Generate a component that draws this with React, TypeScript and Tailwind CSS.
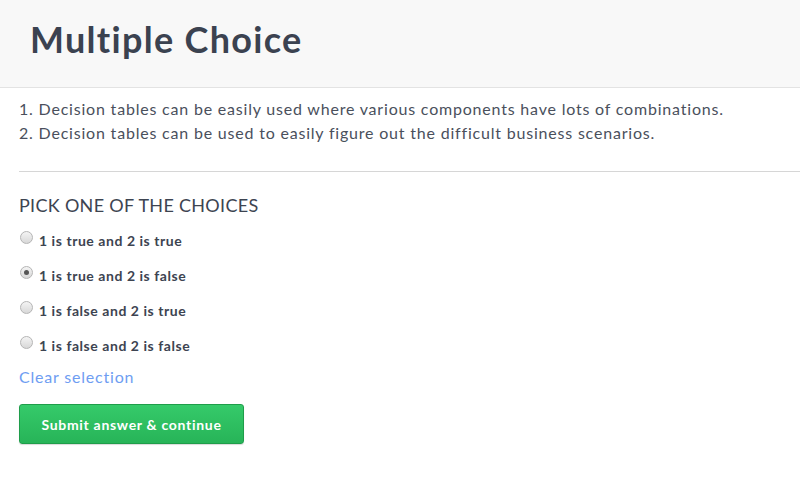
import React from "react";

const options = [
  "1 is true and 2 is true",
  "1 is true and 2 is false",
  "1 is false and 2 is true",
  "1 is false and 2 is false",
];

function Radio({ checked }: { checked: boolean }) {
  return (
    <span className="relative mt-[-6px] inline-flex h-[13px] w-[13px] shrink-0 items-center justify-center rounded-full border border-[#b5b5b5] bg-gradient-to-b from-[#f4f4f4] to-[#d8d8d8]">
      {checked && <span className="h-[5px] w-[5px] rounded-full bg-[#555]" />}
    </span>
  );
}

export default function App() {
  return (
    <div className="min-h-[503px] bg-white text-[#3d4451]" style={{ fontFamily: "Lato, 'Open Sans', sans-serif" }}>
      <div className="h-[88px] border-b border-[#e3e3e3] bg-[#f8f8f8] pl-[30px] pt-[17px]">
        <h1 className="text-[36px] font-bold leading-[44px] tracking-[1.3px] text-[#3b4250]">Multiple Choice</h1>
      </div>
      <div className="pl-[19px]">
        <div className="pt-[9px] text-[16px] leading-[24px] tracking-[0.8px] text-[#4a505c]">
          <p>1. Decision tables can be easily used where various components have lots of combinations.</p>
          <p>2. Decision tables can be used to easily figure out the difficult business scenarios.</p>
        </div>
        <div className="mt-[26px] h-px bg-[#d6d6d6]" />
        <div className="pt-[21px] text-[18px] leading-[24px] tracking-[0.3px] uppercase text-[#3d4451]">Pick one of the choices</div>
        <div className="mt-[6px] flex flex-col">
          {options.map((o, i) => (
            <label key={o} className="flex h-[35px] items-center gap-[6px] pl-[1px]">
              <Radio checked={i === 1} />
              <span className="text-[14px] font-bold tracking-[0.55px] text-[#3d4451]">{o}</span>
            </label>
          ))}
        </div>
        <div className="mt-[2px] text-[16px] leading-[24px] tracking-[0.8px] text-[#6e9df2]">Clear selection</div>
        <button className="mt-[15px] h-[40px] w-[225px] rounded-[3px] border border-[#1f9d4a] bg-gradient-to-b from-[#35ca6a] to-[#27b458] text-[14px] font-bold tracking-[0.7px] text-white shadow-[0_1px_1px_rgba(0,0,0,0.15)]">
          Submit answer &amp; continue
        </button>
      </div>
    </div>
  );
}
